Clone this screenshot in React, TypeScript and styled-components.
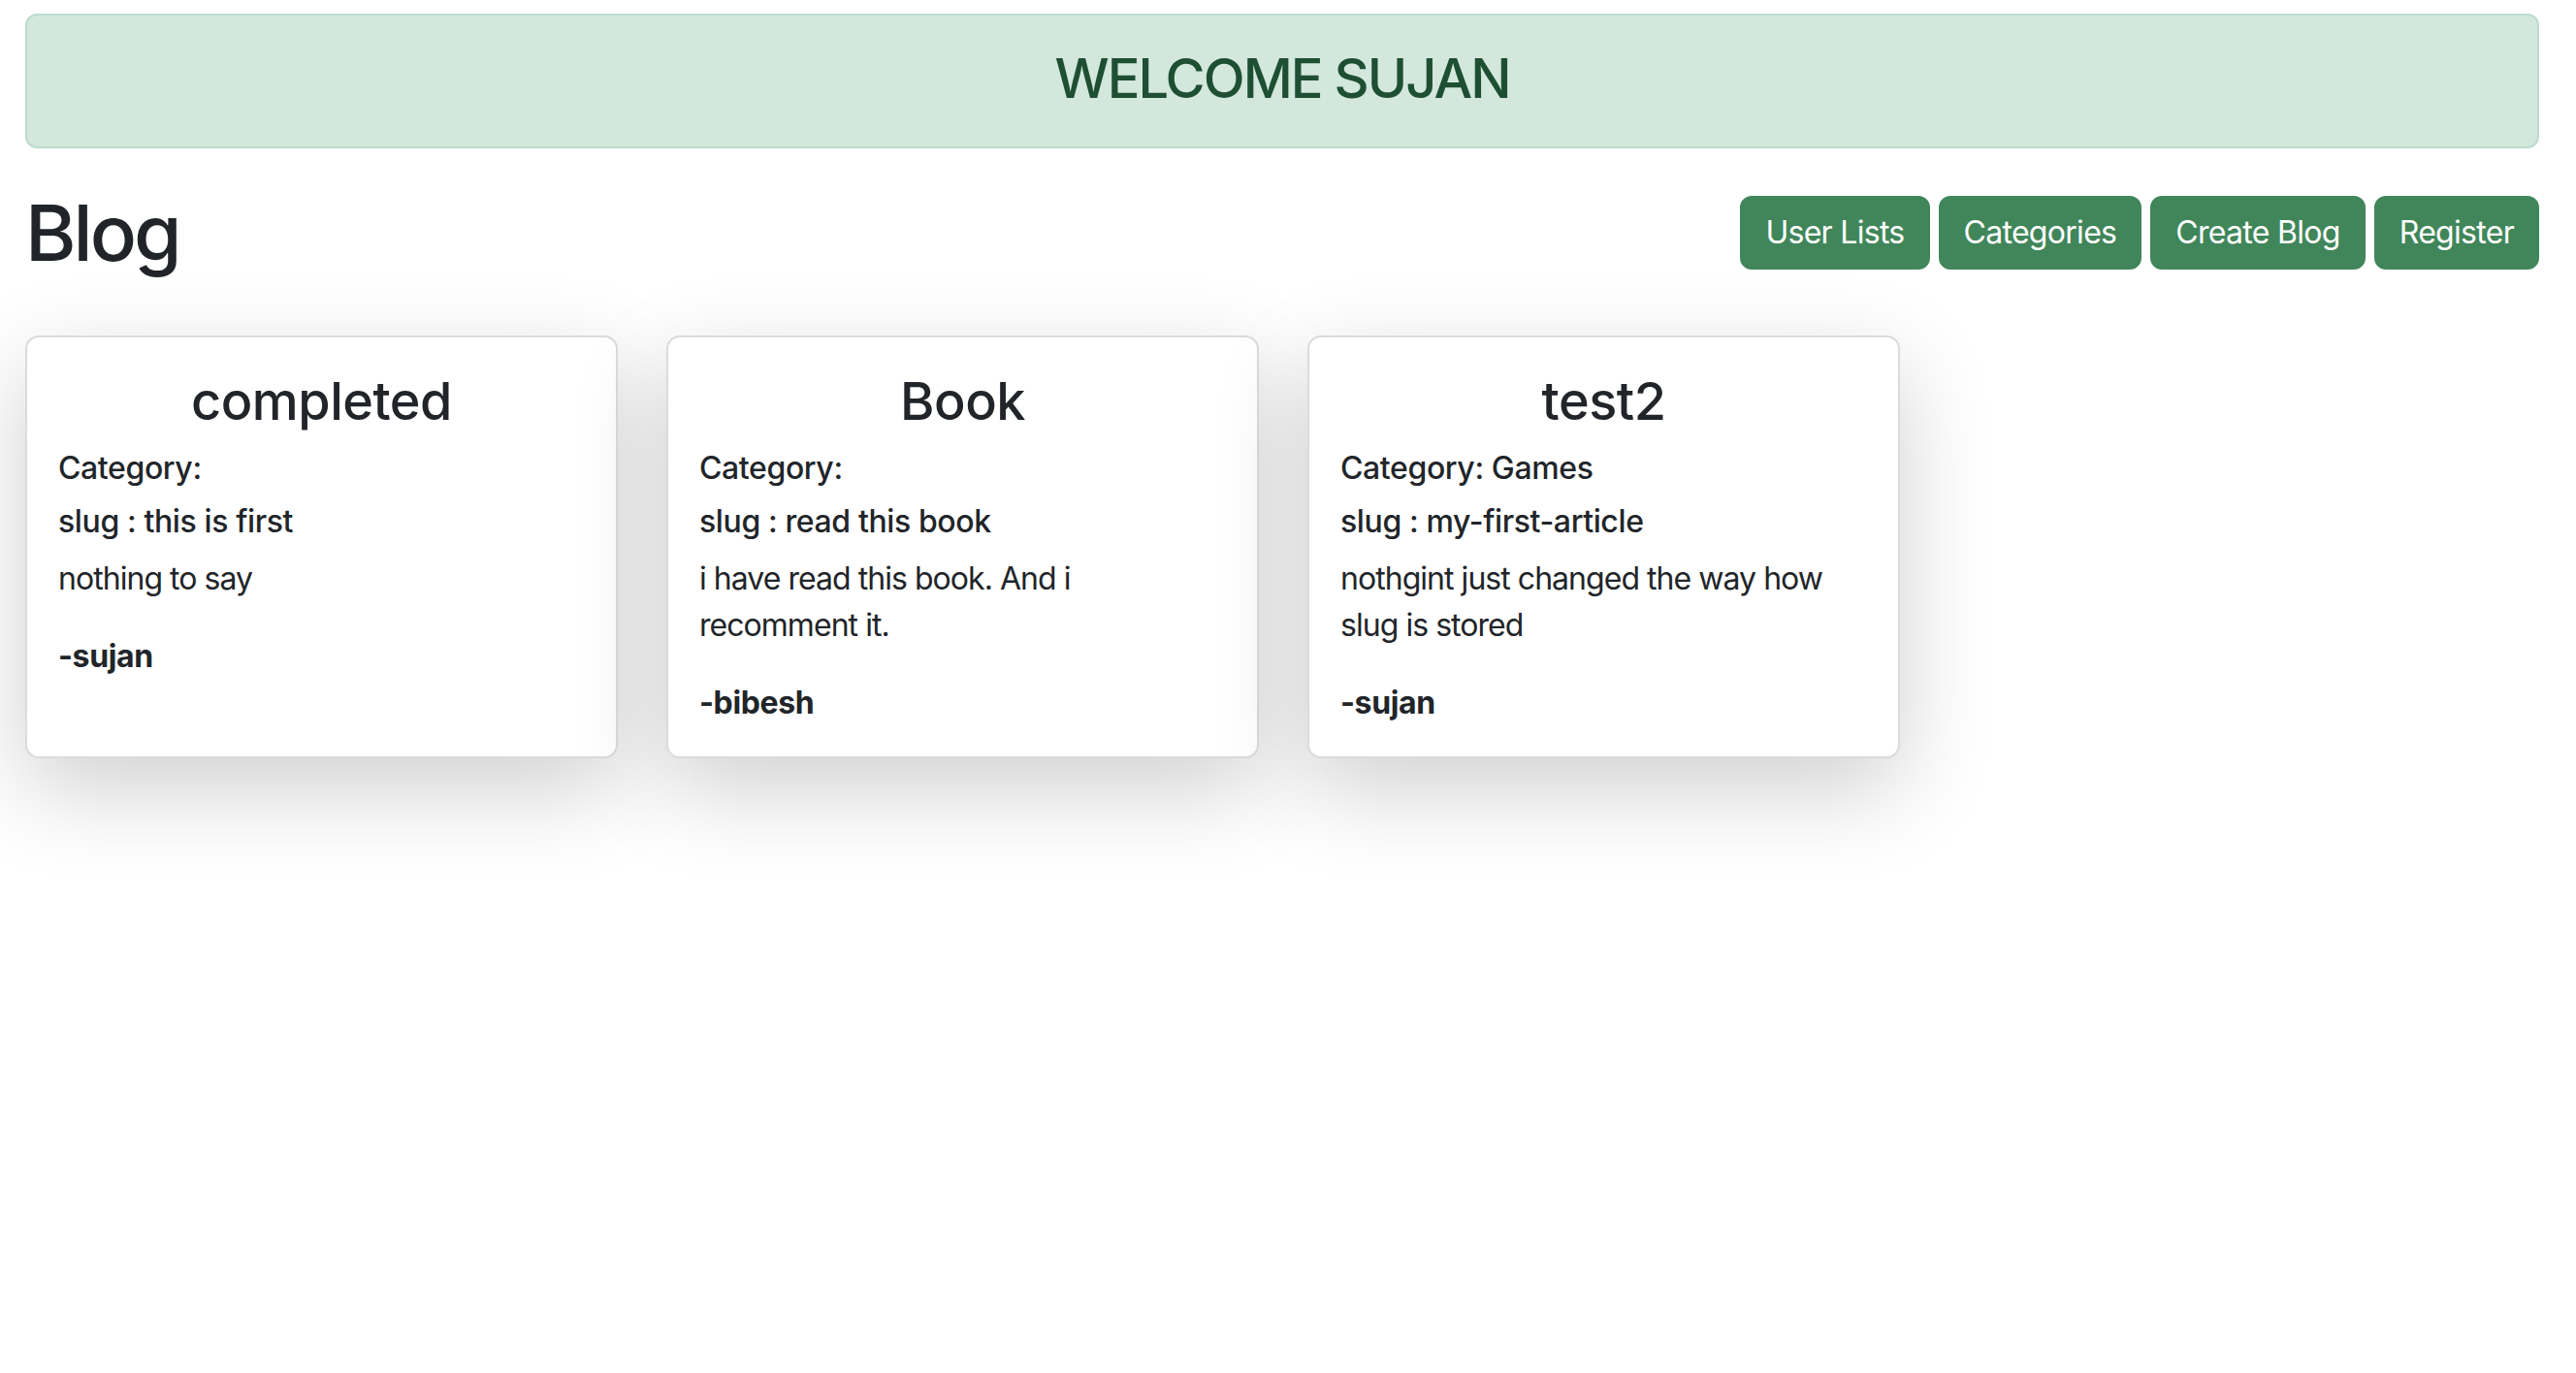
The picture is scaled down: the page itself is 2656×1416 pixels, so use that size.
import React from "react";
import styled, { createGlobalStyle } from "styled-components";

const GlobalStyle = createGlobalStyle`
  html, body {
    margin: 0;
    padding: 0;
    background: #ffffff;
  }
  body {
    font-family: Inter, "Noto Sans", "Liberation Sans", sans-serif;
    color: #212529;
    -webkit-font-smoothing: antialiased;
  }
  * { box-sizing: border-box; }
`;

const Page = styled.div`
  min-height: 100vh;
  padding: 14px 38px 40px 26px;
`;

const Alert = styled.div`
  background: #d3e7dd;
  border: 2px solid #bcdccd;
  border-radius: 12px;
  padding: 32px 32px 36px;
`;

const AlertTitle = styled.h3`
  margin: 0;
  font-size: 56px;
  font-weight: 500;
  line-height: 1.2;
  text-align: center;
  letter-spacing: -0.035em;
  color: #1e4f33;
`;

const HeaderRow = styled.div`
  margin-top: 39px;
  display: flex;
  align-items: center;
  justify-content: space-between;
`;

const PageTitle = styled.h1`
  margin: 0;
  font-size: 80px;
  font-weight: 500;
  line-height: 1.2;
  letter-spacing: -3px;
`;

const ButtonGroup = styled.div`
  display: flex;
  gap: 9px;
`;

const NavButton = styled.button`
  font-family: inherit;
  font-size: 32px;
  line-height: 48px;
  letter-spacing: -0.022em;
  padding: 12px 24px;
  border: 2px solid #40865a;
  border-radius: 12px;
  background: #40865a;
  color: #ffffff;
  cursor: pointer;
`;

const CardRow = styled.div`
  margin-top: 58px;
  display: flex;
  align-items: stretch;
  gap: 50px;
`;

const Card = styled.div`
  width: 611px;
  background: #ffffff;
  border: 2px solid rgba(0, 0, 0, 0.14);
  border-radius: 14px;
  box-shadow: 0 32px 96px rgba(0, 0, 0, 0.19);
`;

const CardBody = styled.div`
  padding: 33px 32px 31px;
  letter-spacing: -0.024em;
`;

const CardTitle = styled.h3`
  margin: 0 0 16px;
  font-size: 54px;
  font-weight: 500;
  line-height: 1.24;
  text-align: center;
  letter-spacing: -0.5px;
`;

const Meta = styled.h6`
  margin: 0 0 16px;
  font-size: 32px;
  font-weight: 500;
  line-height: 1.2;
`;

const Description = styled.p`
  margin: 0 0 32px;
  font-size: 32px;
  line-height: 1.5;
  letter-spacing: -0.03em;
`;

const Author = styled.p`
  margin: 0;
  font-size: 32px;
  font-weight: 700;
  line-height: 1.5;
`;

type Post = {
  title: string;
  category: string;
  slug: string;
  body: string;
  author: string;
};

const posts: Post[] = [
  {
    title: "completed",
    category: "",
    slug: "this is first",
    body: "nothing to say",
    author: "sujan",
  },
  {
    title: "Book",
    category: "",
    slug: "read this book",
    body: "i have read this book. And i recomment it.",
    author: "bibesh",
  },
  {
    title: "test2",
    category: "Games",
    slug: "my-first-article",
    body: "nothgint just changed the way how slug is stored",
    author: "sujan",
  },
];

export default function App() {
  return (
    <>
      <GlobalStyle />
      <Page>
        <Alert>
          <AlertTitle>WELCOME SUJAN</AlertTitle>
        </Alert>
        <HeaderRow>
          <PageTitle>Blog</PageTitle>
          <ButtonGroup>
            <NavButton>User Lists</NavButton>
            <NavButton>Categories</NavButton>
            <NavButton>Create Blog</NavButton>
            <NavButton>Register</NavButton>
          </ButtonGroup>
        </HeaderRow>
        <CardRow>
          {posts.map((p) => (
            <Card key={p.title}>
              <CardBody>
                <CardTitle>{p.title}</CardTitle>
                <Meta>Category: {p.category}</Meta>
                <Meta>slug : {p.slug}</Meta>
                <Description>{p.body}</Description>
                <Author>-{p.author}</Author>
              </CardBody>
            </Card>
          ))}
        </CardRow>
      </Page>
    </>
  );
}
